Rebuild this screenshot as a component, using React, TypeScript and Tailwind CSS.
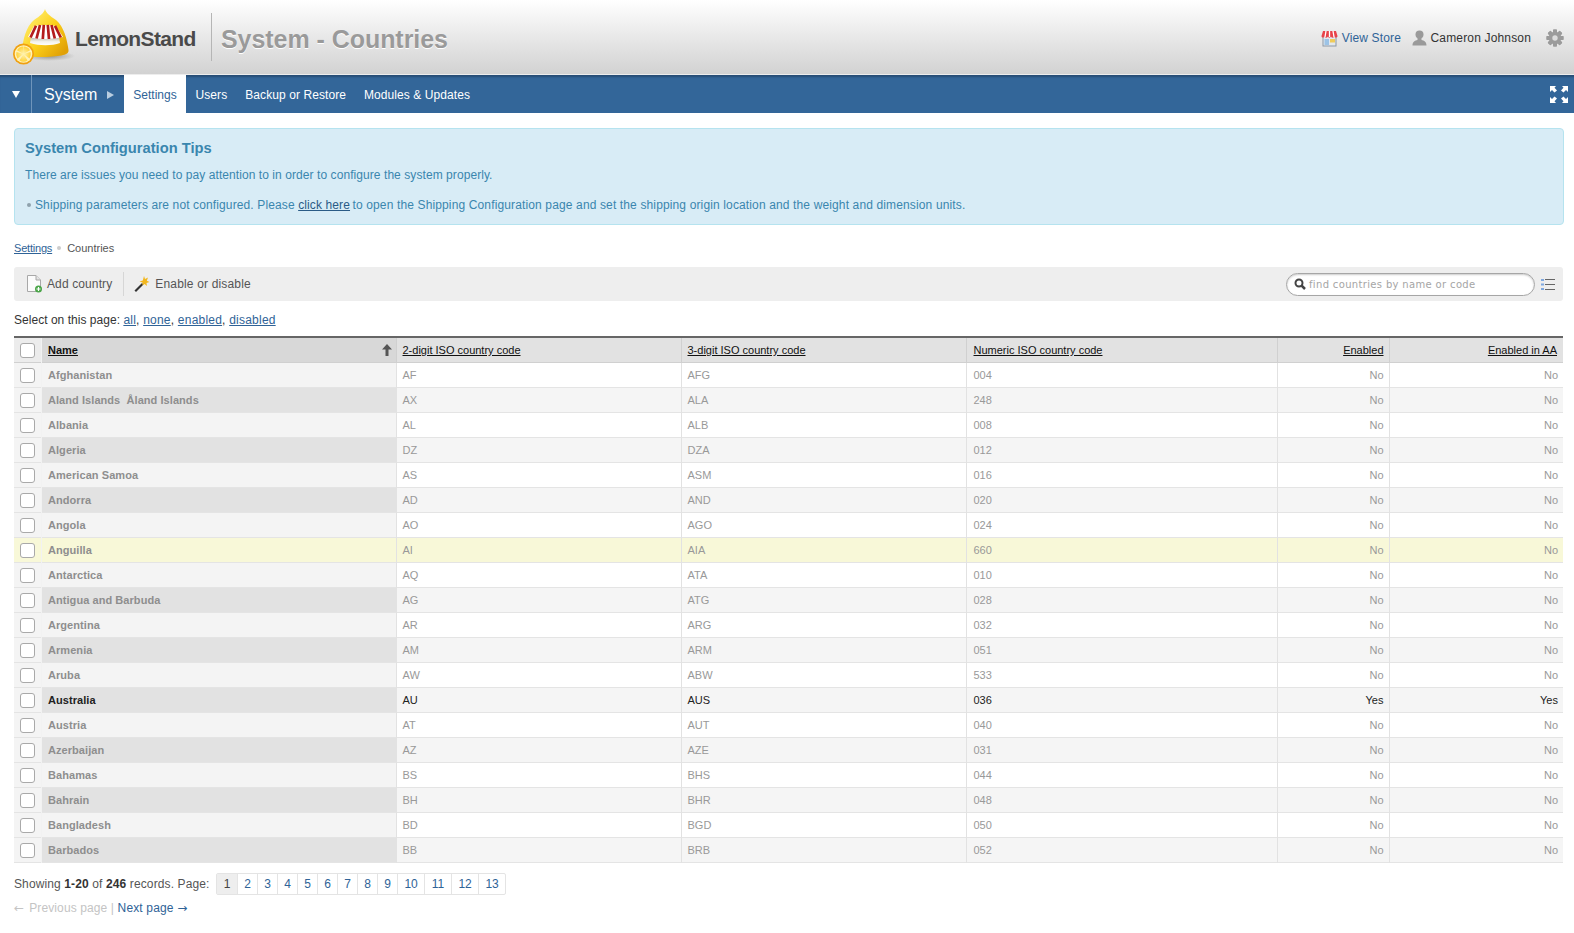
import React from "react";

const rows: [string, string, string, string][] = [
  ["Afghanistan", "AF", "AFG", "004"],
  ["Aland Islands  Åland Islands", "AX", "ALA", "248"],
  ["Albania", "AL", "ALB", "008"],
  ["Algeria", "DZ", "DZA", "012"],
  ["American Samoa", "AS", "ASM", "016"],
  ["Andorra", "AD", "AND", "020"],
  ["Angola", "AO", "AGO", "024"],
  ["Anguilla", "AI", "AIA", "660"],
  ["Antarctica", "AQ", "ATA", "010"],
  ["Antigua and Barbuda", "AG", "ATG", "028"],
  ["Argentina", "AR", "ARG", "032"],
  ["Armenia", "AM", "ARM", "051"],
  ["Aruba", "AW", "ABW", "533"],
  ["Australia", "AU", "AUS", "036"],
  ["Austria", "AT", "AUT", "040"],
  ["Azerbaijan", "AZ", "AZE", "031"],
  ["Bahamas", "BS", "BHS", "044"],
  ["Bahrain", "BH", "BHR", "048"],
  ["Bangladesh", "BD", "BGD", "050"],
  ["Barbados", "BB", "BRB", "052"],
];

function Logo() {
  return (
    <svg width="62" height="62" viewBox="0 0 62 62" className="shrink-0">
      <defs>
        <linearGradient id="lem" x1="0.1" y1="0.2" x2="0.9" y2="0.9">
          <stop offset="0" stopColor="#ffec6a" />
          <stop offset="0.5" stopColor="#fccf1a" />
          <stop offset="1" stopColor="#e0a006" />
        </linearGradient>
        <radialGradient id="shadow">
          <stop offset="0" stopColor="#6a6a5a" stopOpacity="0.65" />
          <stop offset="1" stopColor="#777" stopOpacity="0" />
        </radialGradient>
        <linearGradient id="inner" x1="0" y1="0" x2="0" y2="1">
          <stop offset="0" stopColor="#a9a594" />
          <stop offset="0.6" stopColor="#f2f1ea" />
          <stop offset="1" stopColor="#ffffff" />
        </linearGradient>
        <radialGradient id="pulp">
          <stop offset="0" stopColor="#fff4b0" />
          <stop offset="1" stopColor="#ffd23c" />
        </radialGradient>
      </defs>
      <ellipse cx="36" cy="50" rx="26" ry="5" fill="url(#shadow)" />
      <path d="M32 3 C33 7 37 10 43 14 C51 21 54 33 55.500 44 C56 48 52 50 33 51 C18 51.500 10 50 9 45 C10 33 13 21 21 14 C27 10 31 7 32 3Z" fill="url(#lem)" />
      <path d="M18 30 H46 L47 37 C39 40 26 40 17 37Z" fill="url(#inner)" />
      <path d="M15 31 L21 20 C27 18.500 37 18.500 43 20 L50 31 C40 33.500 25 33.500 15 31Z" fill="#fff" />
      <path d="M17.500 31.500 L23 19.800 M23.500 32.500 L27 19 M29.800 33 L30.800 18.800 M36 33 L34.800 18.800 M41.800 32.500 L38.500 19 M47.800 31.500 L42 19.800" stroke="#b41c1c" strokeWidth="2.700" />
      <circle cx="10.500" cy="48" r="10.500" fill="#f0a010" />
      <circle cx="10.500" cy="48" r="8.800" fill="#fff2b8" />
      <path d="M10.500 48 L10.500 40.500 A7.500 7.500 0 0 1 17 44.200Z M10.500 48 L17.500 46 A7.500 7.500 0 0 1 16.500 52.500Z M10.500 48 L14.500 54.500 A7.500 7.500 0 0 1 6.500 54.500Z M10.500 48 L4.500 52.500 A7.500 7.500 0 0 1 3.500 46Z M10.500 48 L4 44.200 A7.500 7.500 0 0 1 10 40.500Z" fill="url(#pulp)" />
    </svg>
  );
}

function StoreIcon() {
  return (
    <svg width="17" height="17" viewBox="0 0 17 17" className="shrink-0">
      <rect x="2" y="5" width="13" height="11" fill="#e3e8ee" stroke="#8b98a6" />
      <rect x="3.500" y="9" width="4.500" height="6" fill="#9cc3e6" />
      <rect x="9" y="9" width="5" height="3.500" fill="#f0cc5a" />
      <path d="M2 1 H15 L16.500 6 C16.500 8 13.500 8 13.500 6.500 C13 8 10 8 10 6.500 C9.500 8 7 8 7 6.500 C6.500 8 4 8 3.500 6.500 C3 8 .5 8 .5 6Z" fill="#e8434a" />
      <path d="M5 1 L4 7 M8.500 1 V7 M12 1 L13 7" stroke="#fff" strokeWidth="1.300" />
    </svg>
  );
}

function UserIcon() {
  return (
    <svg width="15" height="16" viewBox="0 0 15 16" className="shrink-0">
      <circle cx="7.500" cy="4.500" r="4" fill="#9a9a9a" />
      <path d="M5.500 8 H9.500 V10 C12 10.500 14.500 11.500 14.500 15.500 H.5 C.5 11.500 3 10.500 5.500 10Z" fill="#9a9a9a" />
    </svg>
  );
}

function GearIcon() {
  const teeth = [0, 45, 90, 135, 180, 225, 270, 315];
  return (
    <svg width="18" height="18" viewBox="0 0 18 18" className="shrink-0">
      {teeth.map((t) => (
        <rect key={t} x="7" y="0.500" width="4" height="17" rx="0.800" fill="#9b9b9b" transform={`rotate(${t} 9 9)`} />
      ))}
      <circle cx="9" cy="9" r="6.200" fill="#9b9b9b" />
      <circle cx="9" cy="9" r="2.700" fill="#dcdcdc" />
    </svg>
  );
}

function ExpandIcon() {
  return (
    <svg width="18" height="17" viewBox="0 0 18 17" fill="#fff">
      <path d="M0 0 H6 L4.500 1.800 L7 4.500 L4.500 6.500 L2 4 L0 6Z" />
      <path d="M18 0 H12 L13.500 1.800 L11 4.500 L13.500 6.500 L16 4 L18 6Z" />
      <path d="M0 17 H6 L4.500 15.200 L7 12.500 L4.500 10.500 L2 13 L0 11Z" />
      <path d="M18 17 H12 L13.500 15.200 L11 12.500 L13.500 10.500 L16 13 L18 11Z" />
    </svg>
  );
}

function PageAddIcon() {
  return (
    <svg width="17" height="18" viewBox="0 0 17 18" className="shrink-0">
      <path d="M1.500 .5 H10 L14.500 5 V16.500 H1.500Z" fill="#fbfbfb" stroke="#a8a8a8" />
      <path d="M10 .5 V5 H14.500" fill="#e4e4e4" stroke="#a8a8a8" />
      <circle cx="12.500" cy="14" r="3.500" fill="#4aa548" />
      <path d="M12.500 12 V16 M10.500 14 H14.500" stroke="#fff" strokeWidth="1.200" />
    </svg>
  );
}

function WandIcon() {
  return (
    <svg width="17" height="18" viewBox="0 0 17 18" className="shrink-0">
      <path d="M9 8 L1.500 15.500 L3 17 L10.500 9.500Z" fill="#333" />
      <path d="M11 1 L12 4 L15 2.500 L13.800 5.800 L16.500 7 L13.500 8 L14 11 L11.500 9 L9.500 10.500 L9.500 7.500 L6.500 6.500 L9.800 5.500Z" fill="#f2b71e" />
    </svg>
  );
}

function SearchIcon() {
  return (
    <svg width="12" height="12" viewBox="0 0 12 12" className="shrink-0">
      <circle cx="5" cy="5" r="3.500" fill="none" stroke="#444" strokeWidth="2" />
      <path d="M7.500 7.500 L11 11" stroke="#444" strokeWidth="2.500" />
    </svg>
  );
}

function ListIcon() {
  return (
    <svg width="14" height="13" viewBox="0 0 14 13" className="shrink-0">
      <rect x="0" y="1" width="3" height="2" fill="#7fa8e0" />
      <rect x="0" y="5.500" width="3" height="2" fill="#7fa8e0" />
      <rect x="0" y="10" width="3" height="2" fill="#7fa8e0" />
      <rect x="4" y="1" width="10" height="1" fill="#666" />
      <rect x="4" y="6" width="10" height="1" fill="#666" />
      <rect x="4" y="11" width="10" height="1" fill="#666" />
    </svg>
  );
}

function Check() {
  return <span className="block w-[15px] h-[15px] mx-auto bg-white border border-[#a9a9a9] rounded-[3px]" />;
}

function A({ children, className = "" }: { children: React.ReactNode; className?: string }) {
  return <a className={`underline text-[#2f6397] ${className}`}>{children}</a>;
}

export default function App() {
  return (
    <div className="min-h-[933px] bg-white font-['Liberation_Sans',Arial,sans-serif] text-[12px] tracking-[0.12px] text-[#333]">
      <header className="h-[75px] flex items-center border-b border-[#ededed] bg-gradient-to-b from-white to-[#d2d2d2] pl-[13px] pr-[10px]">
        <Logo />
        <span className="w-[136px] pt-[3px] text-[21px] font-bold tracking-[-0.66px] text-[#4a4a4a]">LemonStand</span>
        <span className="h-[48px] w-px bg-[#b5b5b5]" />
        <h1 className="ml-[9px] pt-[4px] text-[25px] leading-none font-bold tracking-[-0.05px] text-[#9a9a9a] [text-shadow:0_1px_0_#fff]">System - Countries</h1>
        <div className="ml-auto pt-[2px] flex items-center">
          <StoreIcon />
          <a className="ml-[3.5px] text-[#2f6397] tracking-[0.15px]">View Store</a>
          <span className="ml-[10.5px]"><UserIcon /></span>
          <span className="ml-[4px] tracking-[0.16px] text-[#333]">Cameron Johnson</span>
          <span className="ml-[15px]"><GearIcon /></span>
        </div>
      </header>

      <nav className="h-[38px] flex items-stretch bg-[#336699] text-white tracking-[0.08px] shadow-[inset_0_3px_2px_-1px_#274d75]">
        <div className="w-[32px] flex items-center justify-center border-r border-[#6f95bb]">
          <span className="block w-0 h-0 border-x-[4.5px] border-x-transparent border-t-[7px] border-t-white" />
        </div>
        <div className="w-[92px] flex items-center pl-[12px] pt-[2px] text-[16px] tracking-normal">
          System
          <span className="ml-[10px] block w-0 h-0 border-y-[4px] border-y-transparent border-l-[7px] border-l-[#b9cde0]" />
        </div>
        <a className="w-[62px] flex items-center justify-center pt-[2px] bg-white text-[#2f6397] tracking-normal">Settings</a>
        <a className="ml-[9.5px] flex items-center pt-[2px]">Users</a>
        <a className="ml-[18px] flex items-center pt-[2px]">Backup or Restore</a>
        <a className="ml-[18px] flex items-center pt-[2px]">Modules &amp; Updates</a>
        <div className="ml-auto flex items-center pr-[6px]"><ExpandIcon /></div>
      </nav>

      <main className="pl-[14px] pr-[11px]">
        <section className="mt-[15px] mr-[-1px] h-[97px] rounded-[4px] border border-[#b5e3ef] bg-[#d8ecf6] px-[10px] text-[#3a86ae]">
          <h2 className="mt-[11px] text-[14.7px] leading-[17px] font-bold tracking-normal">System Configuration Tips</h2>
          <p className="mt-[10px] leading-[16px] tracking-[0.07px]">There are issues you need to pay attention to in order to configure the system properly.</p>
          <p className="mt-[14px] leading-[16px] flex items-center">
            <span className="inline-block w-[4px] h-[4px] rounded-full bg-[#8fa2ad] ml-[2px] mr-[4px]" />
            <span>
              Shipping parameters are not configured. Please <a className="underline text-[#2a5b86]">click here</a> <span className="ml-[-1px] tracking-[0.135px]">to open the Shipping Configuration page and set the shipping origin location and the weight and dimension units.</span>
            </span>
          </p>
        </section>

        <div className="mt-[16px] h-[14px] flex items-center text-[11px] tracking-normal text-[#555]">
          <A className="tracking-[-0.2px]">Settings</A>
          <span className="w-[4px] h-[4px] rounded-full bg-[#ccc] ml-[5px] mr-[6px]" />
          <span>Countries</span>
        </div>

        <div className="mt-[12px] h-[34px] flex items-center rounded-[3px] bg-[#eeeeee] text-[#555]">
          <span className="ml-[12px]"><PageAddIcon /></span>
          <span className="ml-[4px]">Add country</span>
          <span className="ml-[11px] h-[24px] w-px bg-[#d6d6d6]" />
          <span className="ml-[9px]"><WandIcon /></span>
          <span className="ml-[5px] tracking-[0.16px]">Enable or disable</span>
          <div className="ml-auto w-[249px] h-[23px] flex items-center pl-[7px] bg-white border border-[#a6a6a6] rounded-full shadow-[inset_0_1px_2px_#ccc]">
            <SearchIcon />
            <span className="ml-[3px] pt-[1px] text-[10px] tracking-[0.34px] text-[#a5a5a5] font-['DejaVu_Sans',sans-serif]">find countries by name or code</span>
          </div>
          <span className="ml-[6px] mr-[8px]"><ListIcon /></span>
        </div>

        <div className="mt-[12px] leading-[15px] tracking-[0.03px]">
          Select on this page: <span className="tracking-[0.22px]"><A>all</A>, <A>none</A>, <A>enabled</A>, <A>disabled</A></span>
        </div>

        <table className="mt-[8px] w-[1549px] table-fixed border-collapse border-t-2 border-t-[#666] border-b border-b-[#bbb] text-[11px] tracking-normal">
          <colgroup>
            <col className="w-[27px]" />
            <col className="w-[355px]" />
            <col className="w-[285px]" />
            <col className="w-[285px]" />
            <col className="w-[311px]" />
            <col className="w-[112px]" />
            <col className="w-[174px]" />
          </colgroup>
          <thead>
            <tr className="h-[25px] border-b border-[#d0d0d0] bg-[#e2e2e2] text-[#111]">
              <th className="p-0 pt-[2px] bg-[#ececec]"><Check /></th>
              <th className="p-0 pl-[6.5px] pr-[4px] pt-[1px] text-left bg-[#d8d8d8] border-l border-[#f2f2f2]">
                <div className="flex items-center justify-between">
                  <span className="underline font-bold text-[11px]">Name</span>
                  <svg width="10" height="12" viewBox="0 0 10 12"><path d="M5 0 L10 5.500 H6.500 V12 H3.500 V5.500 H0Z" fill="#555" /></svg>
                </div>
              </th>
              <th className="p-0 pl-[6px] pt-[1px] text-left font-normal border-l border-[#d0d0d0]"><span className="underline">2-digit ISO country code</span></th>
              <th className="p-0 pl-[6px] pt-[1px] text-left font-normal border-l border-[#d0d0d0]"><span className="underline">3-digit ISO country code</span></th>
              <th className="p-0 pl-[7px] pt-[1px] text-left font-normal border-l border-[#d0d0d0]"><span className="underline">Numeric ISO country code</span></th>
              <th className="p-0 pr-[5px] pt-[1px] text-right font-normal border-l border-[#d0d0d0]"><span className="underline">Enabled</span></th>
              <th className="p-0 pr-[6px] pt-[1px] text-right font-normal border-l border-[#d0d0d0]"><span className="underline">Enabled in AA</span></th>
            </tr>
          </thead>
          <tbody>
            {rows.map((r, i) => {
              const hl = r[0] === "Anguilla";
              const on = r[0] === "Australia";
              const odd = i % 2 === 1;
              const rowBg = hl ? "bg-[#f8f8d8]" : odd ? "bg-[#f5f5f5]" : "bg-white";
              const nameBg = hl ? "bg-[#f8f8d8]" : odd ? "bg-[#e2e2e2]" : "bg-[#f4f4f4]";
              const checkBg = hl ? "bg-[#f8f8d8]" : "bg-[#f4f4f4]";
              const color = on ? "text-[#222]" : "text-[#999]";
              const nameColor = on ? "text-[#222]" : "text-[#8e8e8e]";
              const border = "border-l border-[#e2e2e2]";
              return (
                <tr key={r[1]} className={`h-[25px] border-b border-[#e4e4e4] ${rowBg} ${color}`}>
                  <td className={`p-0 pt-[2px] ${checkBg}`}><Check /></td>
                  <td className={`p-0 pt-[2px] pl-[6.5px] font-bold tracking-[0.06px] whitespace-pre ${nameBg} ${nameColor} border-l border-[#f2f2f2]`}>{r[0]}</td>
                  <td className={`p-0 pt-[2px] pl-[6px] ${border}`}>{r[1]}</td>
                  <td className={`p-0 pt-[2px] pl-[6px] ${border}`}>{r[2]}</td>
                  <td className={`p-0 pt-[2px] pl-[7px] ${border}`}>{r[3]}</td>
                  <td className={`p-0 pt-[2px] pr-[5px] text-right ${border}`}>{on ? "Yes" : "No"}</td>
                  <td className={`p-0 pt-[2px] pr-[5px] text-right ${border}`}>{on ? "Yes" : "No"}</td>
                </tr>
              );
            })}
          </tbody>
        </table>

        <div className="mt-[10px] h-[22px] flex items-center text-[#555]">
          <span>Showing <b className="text-[#333]">1-20</b> of <b className="text-[#333]">246</b> records. Page:</span>
          <div className="ml-[6.5px] h-[22px] flex border border-[#e4e4e4] rounded-[2px] text-[#2f6397] tracking-normal">
            {["1", "2", "3", "4", "5", "6", "7", "8", "9", "10", "11", "12", "13"].map((p, i) => (
              <span
                key={p}
                className={`h-full flex items-center justify-center ${i < 9 ? "w-[20px]" : "w-[27px]"} ${i > 0 ? "border-l border-[#e4e4e4]" : "bg-[#eeeeee] text-[#444]"}`}
              >
                {p}
              </span>
            ))}
          </div>
        </div>

        <div className="mt-[5px] leading-[16px] text-[#c4c4c4]">
          <span className="mr-[1.5px] font-['DejaVu_Sans',sans-serif]">←</span> Previous page | <a className="text-[#2f6397] tracking-[0.15px]">Next page <span className="font-['DejaVu_Sans',sans-serif]">→</span></a>
        </div>
      </main>
    </div>
  );
}
